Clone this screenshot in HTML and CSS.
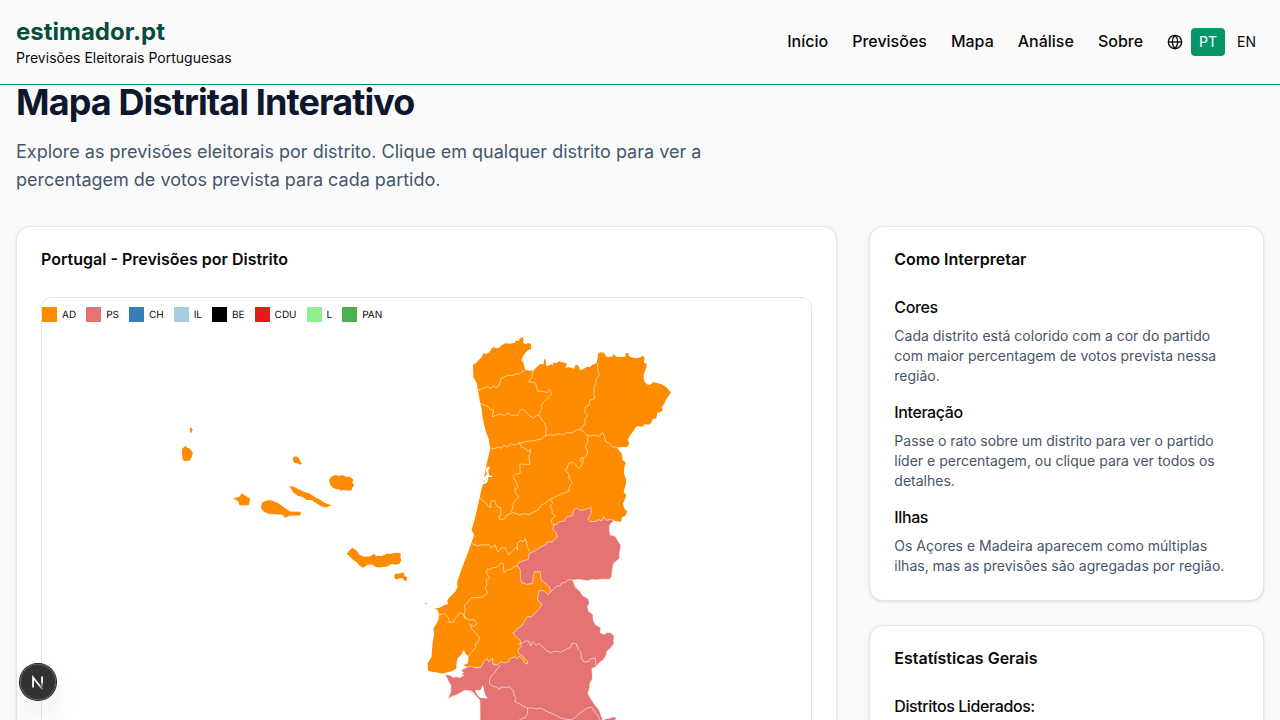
FILE: index.html
```html
<!DOCTYPE html>
<html lang="pt">
<head>
<meta charset="utf-8">
<meta name="viewport" content="width=device-width, initial-scale=1">
<title>estimador.pt</title>
<link rel="stylesheet" href="styles.css">
</head>
<body>
<header class="site-header">
  <div class="brand">
    <a class="brand-name" href="#">estimador.pt</a>
    <p class="brand-tag">Previsões Eleitorais Portuguesas</p>
  </div>
  <nav class="nav">
    <a href="#">Início</a>
    <a href="#">Previsões</a>
    <a href="#">Mapa</a>
    <a href="#">Análise</a>
    <a href="#">Sobre</a>
    <div class="lang">
      <svg class="globe" viewBox="0 0 24 24" aria-hidden="true"><circle cx="12" cy="12" r="10"/><path d="M12 2a14.5 14.5 0 0 0 0 20 14.5 14.5 0 0 0 0-20"/><path d="M2 12h20"/></svg>
      <button class="lang-btn active" type="button">PT</button>
      <button class="lang-btn" type="button">EN</button>
    </div>
  </nav>
</header>

<main class="page">
  <h1>Mapa Distrital Interativo</h1>
  <p class="intro">Explore as previsões eleitorais por distrito. Clique em qualquer distrito para ver a percentagem de votos prevista para cada partido.</p>
  <div class="grid">
    <section class="card map-card">
      <h2>Portugal - Previsões por Distrito</h2>
      <div class="map-box">
        <ul class="legend">
          <li><i class="ad"></i>AD</li>
          <li><i class="ps"></i>PS</li>
          <li><i class="ch"></i>CH</li>
          <li><i class="il"></i>IL</li>
          <li><i class="be"></i>BE</li>
          <li><i class="cdu"></i>CDU</li>
          <li><i class="l"></i>L</li>
          <li><i class="pan"></i>PAN</li>
        </ul>
        <svg class="map" viewBox="42 324 769 576" role="img" aria-label="Mapa de Portugal por distrito">
          <g transform="translate(460 330) scale(.33333)">
            <path class="land-ad" d="M38 105L48 98 55 91 66 80 68 70 78 72 88 66 95 55 100 50 106 55 115 54 124 46 135 40 150 41 165 38 165 32 175 32 181 24 188 21 190 30 188 38 195 42 205 39 212 42 213 57 203 60 193 72 186 85 184 91 190 98 192 108 196 120 220 121 229 112 240 102 250 103 252 88 256 87 258 108 265 107 272 103 279 104 280 97 287 100 298 93 305 97 320 100 316 113 325 111 342 116 346 104 355 107 359 120 370 117 380 110 390 111 395 105 408 100 412 85 414 70 422 67 433 70 438 80 455 80 460 72 468 80 482 81 495 80 497 69 504 69 508 80 520 83 530 85 540 82 548 77 553 83 551 98 560 102 555 122 552 130 550 140 553 155 560 163 570 165 578 157 590 159 605 163 618 172 632 187 625 198 618 207 613 220 604 232 608 241 600 247 591 248 588 265 577 268 573 279 565 284 554 282 548 290 530 288 520 302 508 318 503 330 507 342 501 351 490 351 470 352 485 372 487 390 497 397 492 413 491 430 497 447 498 458 490 485 498 495 493 510 488 520 492 535 500 543 498 555 485 562 482 576 462 572L340 650 290 740 280 784 262 800 250 860 300 1000 200 1008 25 1012 10 1005 22 1000 25 989 24 978 15 970 11 959 4 973 -8 985 -10 995 -12 1016 -25 1023 -53 1030 -73 1026 -85 1025 -96 1022 -98 1000 -86 980 -83 940 -78 910 -80 895 -65 870 -64 850 -69 838 -78 835 -62 833 -47 825 -36 822 -39 812 -34 804 -15 785 -8 772 -9 755 5 715 24 665 35 635 42 615 34 600 43 570 58 505 62 485 70 455 78 407 88 365 90 355 85 325 77 305 72 285 65 250 64 235 60 220 55 190 50 161 40 142Z"/>
            <path class="land-ps edge" d="M462 572L455 577 448 585 448 600 450 615 465 618 473 632 482 645 478 670 478 685 460 700 457 715 454 740 447 748 425 747 410 750 395 748 380 752 358 748 338 750 345 770 360 785 367 796 385 807 387 820 382 830 385 843 398 853 399 870 405 883 422 893 420 908 433 913 440 907 452 908 462 918 460 930 462 940 450 955 440 963 438 975 430 988 415 1000 408 1010 395 1015 397 1045 389 1060 388 1075 383 1088 388 1100 405 1125 417 1140 428 1170 450 1200 420 1300 440 1500 400 1570 340 1560 280 1610 210 1570 120 1560 70 1590 60 1560 90 1400 75 1270 60 1170 59 1110 45 1098 28 1082 15 1080 -8 1093 -22 1098 -37 1105 -28 1083 -28 1065 -37 1050 -45 1033 -29 1035 -22 1041 -10 1040 0 1042 11 1035 2 1034 10 1027 4 1023 6 1017 20 1012 30 1008 47 1013 60 1012 65 1008 70 995 80 985 85 995 97 985 98 1002 112 1005 122 995 135 998 145 995 150 985 163 980 170 985 178 978 189 990 193 998 201 1002 203 995 190 980 176 970 173 960 183 948 180 930 174 925 165 916 158 908 165 905 170 898 185 887 195 870 202 860 215 860 225 848 238 835 245 822 232 808 234 795 238 780 252 783 265 793 272 785 268 770 250 755 242 748 240 725 223 725 219 740 217 760 200 763 184 757 181 745 180 718 170 705 177 697 190 692 204 688 208 669 225 663 242 650 255 645 262 636 277 635 292 620 287 607 278 598 280 585 290 583 298 575 312 573 320 560 337 557 340 540 348 535 356 538 365 542 378 537 392 532 393 550 383 565 390 575 405 574 415 569 425 572 430 560 437 571 450 568Z"/>
            <path class="land-ps" d="M434 1167l16-3 6-3 12 2-5 7h-10l-8 8-13-4z"/>
            <path class="water" d="M44 1081L62 1079 67 1064 71 1076 73 1088 82 1105 60 1103 52 1095ZM31 1082L34 1081 58 1108 56 1112ZM65 462L74 452 70 446 80 432 76 418 83 410 90 411 84 421 87 436 96 438 96 441 85 441 82 455 74 462Z"/>
            <path class="border" d="M53 180L68 176 80 170 91 174 101 168 106 174 114 170 120 156 123 145 134 140 145 136 155 137 166 132 178 131 187 124 199 119 214 123 221 119M221 119L216 132 216 141 205 155 223 157 228 165 232 183 249 184 262 188 268 178 274 189 268 200 258 209 248 218 243 229 244 239 235 253 241 263 251 277 258 290 256 317M60 220L74 226 85 230 90 239 101 240 96 260 107 256 121 252 133 257 145 249 155 258 166 254 172 258 179 241 189 238 199 249 209 258 219 264 227 258 236 254M412 100L413 122 417 135 407 148 409 158 402 169 401 190 404 205 388 211 387 225 375 231 374 247 383 258 374 266 374 281 367 290 358 299M90 354L103 356 114 350 123 355 130 346 143 351 151 341 166 345 177 338 190 338 203 333 219 332 232 329 243 327 256 317 270 314 284 315 294 311 307 315 321 308 333 309 348 301 362 296 370 306 380 315 390 318 404 315 417 319 427 307 433 320 436 334 446 339 457 350 470 352M177 338L184 352 196 355 204 366 210 358 211 367 206 377 209 403 193 403 179 402 180 429 165 433 158 440 168 456 174 472 164 477 167 491 176 502 165 510 159 520 157 535 153 545M383 317L382 338 375 349 382 361 379 378 372 384 363 383 359 390 365 397 370 390 367 384M369 398L362 409 355 415 346 405 337 397 326 399 322 411 316 422 326 431 327 447 336 456 329 468 324 485 304 491 270 508 257 518 244 525 234 540 220 546 207 553 192 551 177 555 160 547 140 555 133 567 118 568 115 558 122 557 122 532 110 530 104 513 96 511 91 518 92 533 85 529 77 519 66 510 58 502M270 508L278 519 270 528 275 538 276 549 285 558 275 567 272 577 281 584M36 641L52 647 65 644 77 645 84 643 95 652 105 645 108 654 113 666 124 653 136 653 140 664 146 674 157 662 168 651 172 660 171 640 181 632 190 635 195 626 199 637 201 649 208 664M170 707L161 711 153 717 143 719 131 727 129 700 121 700 109 712 97 713 91 718 82 716 79 730 89 743 78 750 81 763 75 773 82 789 66 801 31 804 22 818 13 827 15 842 11 855 16 867M-64 855L-47 850 -36 862 -32 877 -20 876 -14 864 1 848 10 852 13 861 28 870 42 869 51 881 38 889 30 881 34 895 47 910 58 923 53 938 46 941 47 950 39 961 30 971 22 986M338 750L324 748 315 759 305 757 300 767 290 768 272 785M174 944L187 938 196 932 207 934 211 948 217 935 228 945 237 940 247 950 257 960 271 968 285 963 303 966 320 956 332 951 335 939 348 941 354 957 361 963 364 985 372 996 385 994 390 986 405 984 407 1008M122 1005L110 1017 104 1028 96 1034 88 1046 88 1061 98 1068 111 1072 119 1078 121 1070 135 1072 149 1070 159 1083 163 1099 168 1104 163 1114 177 1120 188 1127 202 1134 214 1133 228 1136 243 1134 260 1144 278 1151 291 1158 304 1164 318 1167 334 1169 346 1161 356 1151 370 1141 381 1134 394 1131 404 1146 413 1157 420 1170M202 1134L202 1150 195 1162 180 1168 165 1180"/>
          </g>
          <g class="land-ad" transform="translate(170 420) scale(.33333)">
            <path d="M59 24l4-2 5 6-4 10-4-1zM36 87l6-6 5-4 4 6 6 1 6 7 5 6-2 12-8 13-15 1-5-4-2-16zM188 234l12-2 8-3 7-9 8 5 17 10-3 20-28 1-5-12-8-6zM274 252l7-8 15-4 14 3 13 6 12 8 12 9 13 8 30 1 3 4-4 7-31 1-13 6-8-9-42-3-14-7-8-9zM359 198l12 2 13 7 18 8 18 6 16 11 15 8 12 8 22 8-19 6-14-4-12-8-16-10-14 0-13-9-14-4-13-10-8-12zM368 118l3-9 9 0 6 5 5 10 5 7-6 3-10-5-8-1zM477 180l6-10 12-5 13 2 10-2 9 5 14 1 9 8-4 9 7 7-7 8 0 5-5 4-25-2-3 3-3-4-13-2-10-5-7-8zM530 400l9-10 8-7 8 6 5 3 8 12 13 5 15 1 8-4 7-5 7 7 17 0 17-8 10 2 10-3 13 0 7 1-1 10 2 12-5 9-9 3-15-2-13 7-11 2-16 1-10-3-8-6-13 1-14 9-10-6-9-10-11-8-10-9zM673 464l5-4 11 1 5-4 7 1 2 9 8 5-1 10-8-1-6-7-9 1-7 3-7-3z"/>
            <path d="M765 548l4 1v3l-4-1z"/>
          </g>
        </svg>
      </div>
    </section>
    <aside class="side">
      <section class="card">
        <h2>Como Interpretar</h2>
        <div class="notes">
          <div>
            <h3>Cores</h3>
            <p>Cada distrito está colorido com a cor do partido com maior percentagem de votos prevista nessa região.</p>
          </div>
          <div>
            <h3>Interação</h3>
            <p>Passe o rato sobre um distrito para ver o partido líder e percentagem, ou clique para ver todos os detalhes.</p>
          </div>
          <div>
            <h3>Ilhas</h3>
            <p>Os Açores e Madeira aparecem como múltiplas ilhas, mas as previsões são agregadas por região.</p>
          </div>
        </div>
      </section>
      <section class="card">
        <h2>Estatísticas Gerais</h2>
        <h3>Distritos Liderados:</h3>
      </section>
    </aside>
  </div>
</main>

<button class="dev-badge" type="button" aria-label="Next.js">
  <svg viewBox="0 0 40 40" aria-hidden="true">
    <defs>
      <linearGradient id="fade" x1="0" y1="13" x2="0" y2="26" gradientUnits="userSpaceOnUse"><stop stop-color="#fff"/><stop offset=".5" stop-color="#fff"/><stop offset="1" stop-color="#fff" stop-opacity="0"/></linearGradient>
      <linearGradient id="diag" x1="15" y1="14" x2="26" y2="28" gradientUnits="userSpaceOnUse"><stop offset=".6" stop-color="#fff"/><stop offset="1" stop-color="#fff" stop-opacity=".2"/></linearGradient>
    </defs>
    <path d="M14.500 26V15L25 28" fill="none" stroke="url(#diag)" stroke-width="2"/>
    <path d="M23.500 14h2v12h-2z" fill="url(#fade)"/>
  </svg>
</button>
</body>
</html>
```
FILE: styles.css
```css
* { box-sizing: border-box; }
body {
  margin: 0;
  background: #f8fafc;
  color: #0a0a0a;
  font-family: Inter, "Liberation Sans", sans-serif;
  font-size: 16px;
  line-height: 24px;
}
h1, h2, h3, p, ul { margin: 0; padding: 0; }
h1, h3 { letter-spacing: -0.025em; }
a { color: inherit; text-decoration: none; }
button { font: inherit; border: 0; cursor: pointer; }

.site-header {
  position: fixed;
  inset: 0 0 auto;
  z-index: 10;
  display: flex;
  align-items: center;
  justify-content: space-between;
  padding: 16px;
  background: #fafafa;
  border-bottom: 1px solid #059669;
}
.brand-name {
  display: block;
  color: #064e3b;
  font-size: 24px;
  line-height: 32px;
  font-weight: 700;
}
.brand-tag { font-size: 14px; line-height: 20px; }
.nav {
  display: flex;
  align-items: flex-start;
  gap: 24px;
  line-height: 26px;
  font-weight: 500;
}
.lang { display: flex; align-items: center; gap: 4px; }
.globe {
  width: 16px;
  height: 16px;
  margin-right: 4px;
  fill: none;
  stroke: currentColor;
  stroke-width: 2;
}
.lang-btn {
  padding: 4px 8px;
  border-radius: 4px;
  background: none;
  color: inherit;
  font-size: 14px;
  line-height: 20px;
  font-weight: 400;
}
.lang-btn.active { background: #059669; color: #fff; }

.page { padding: 82px 16px 32px; }
h1 {
  color: #0f172a;
  font-size: 36px;
  line-height: 40px;
  font-weight: 700;
}
.intro {
  max-width: 768px;
  margin: 16px 0 32px;
  color: #475569;
  font-size: 18px;
  line-height: 28px;
}
.grid {
  display: grid;
  grid-template-columns: repeat(3, minmax(0, 1fr));
  gap: 32px;
}
.map-card { grid-column: span 2; }
.side { display: flex; flex-direction: column; gap: 24px; }
.card {
  padding: 24px;
  background: #fff;
  border: 1px solid #e5e5e5;
  border-radius: 14px;
  box-shadow: 0 1px 3px rgba(0, 0, 0, .1), 0 1px 2px -1px rgba(0, 0, 0, .1);
}
h2 { margin-bottom: 30px; font-size: 16px; line-height: 16px; font-weight: 600; }
h3 { font-size: 16px; line-height: 21px; font-weight: 500; }
.notes { display: flex; flex-direction: column; gap: 16px; }
.notes p { margin-top: 8px; color: #475569; font-size: 14px; line-height: 20px; }

.map-box {
  overflow: hidden;
  padding-top: 9px;
  border: 1px solid #e5e5e5;
  border-radius: 10px;
}
.legend {
  display: flex;
  gap: 10px;
  list-style: none;
  font-size: 10px;
  line-height: 17px;
  text-rendering: geometricPrecision;
}
.legend li { display: flex; gap: 5px; align-items: flex-start; }
.legend i { width: 15px; height: 15px; }
.ad { background: #ff8c00; }
.ps { background: #e57373; }
.ch { background: #377eb8; }
.il { background: #a6cee3; }
.be { background: #000; }
.cdu { background: #e41a1c; }
.l { background: #90ee90; }
.pan { background: #4caf50; }
.map { display: block; width: 100%; }
.land-ad { fill: #ff8c00; }
.land-ps { fill: #e57373; }
.water { fill: #fff; }
.border, .edge { stroke: #fff; stroke-opacity: .85; stroke-width: 2; stroke-linejoin: round; }
.border { fill: none; }

.dev-badge {
  position: fixed;
  left: 20px;
  bottom: 20px;
  z-index: 20;
  width: 36px;
  height: 36px;
  padding: 0;
  border-radius: 50%;
  background: rgba(0, 0, 0, .8);
  box-shadow: 0 0 0 1px #171717, inset 0 0 0 1px rgba(255, 255, 255, .14), 0 16px 32px -8px rgba(0, 0, 0, .24);
}
.dev-badge svg { display: block; width: 36px; height: 36px; }
```
